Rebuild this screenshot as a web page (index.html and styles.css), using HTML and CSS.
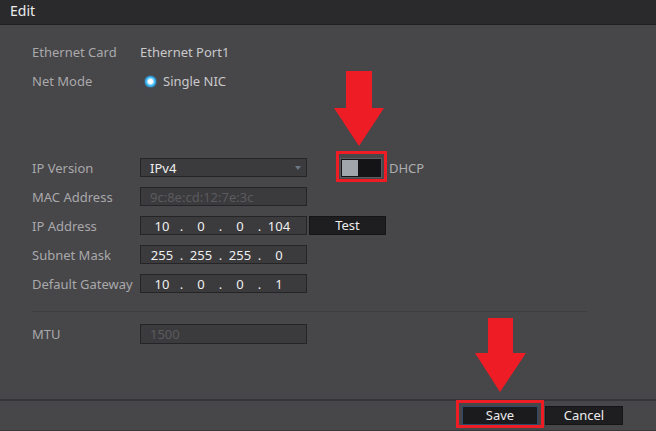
FILE: index.html
```html
<!DOCTYPE html>
<html>
<head>
<meta charset="utf-8">
<link rel="stylesheet" href="styles.css">
</head>
<body>
<div class="window">
  <header class="titlebar">Edit</header>
  <main class="content">
    <div class="row"><span class="label">Ethernet Card</span><span class="value">Ethernet Port1</span></div>
    <div class="row"><span class="label">Net Mode</span><span class="radio-wrap"><span class="radio"></span><span class="value">Single NIC</span></span></div>
    <div class="spacer"></div>
    <div class="row">
      <span class="label">IP Version</span>
      <div class="field select"><span>IPv4</span><span class="caret"></span></div>
      <div class="toggle-wrap">
        <div class="toggle"><span class="knob"></span></div>
        <span class="toggle-label">DHCP</span>
        <span class="highlight hl-toggle"></span>
        <svg class="arrow arrow-top" width="52" height="76" viewBox="0 0 52 76"><polygon points="13,0 39,0 39,37 51,37 26,75 1,37 13,37" fill="#ee1c25"/></svg>
      </div>
    </div>
    <div class="row"><span class="label">MAC Address</span><div class="field disabled">9c:8e:cd:12:7e:3c</div></div>
    <div class="row"><span class="label">IP Address</span>
      <div class="field ip"><span class="seg">10</span><span class="dot">.</span><span class="seg">0</span><span class="dot">.</span><span class="seg">0</span><span class="dot">.</span><span class="seg">104</span></div>
      <button class="btn test">Test</button>
    </div>
    <div class="row"><span class="label">Subnet Mask</span>
      <div class="field ip"><span class="seg">255</span><span class="dot">.</span><span class="seg">255</span><span class="dot">.</span><span class="seg">255</span><span class="dot">.</span><span class="seg">0</span></div>
    </div>
    <div class="row"><span class="label">Default Gateway</span>
      <div class="field ip"><span class="seg">10</span><span class="dot">.</span><span class="seg">0</span><span class="dot">.</span><span class="seg">0</span><span class="dot">.</span><span class="seg">1</span></div>
    </div>
    <hr class="sep">
    <div class="row"><span class="label">MTU</span><div class="field disabled mtu">1500</div></div>
  </main>
  <footer class="footer">
    <div class="save-wrap">
      <button class="btn save">Save</button>
      <span class="highlight hl-save"></span>
      <svg class="arrow arrow-bottom" width="52" height="76" viewBox="0 0 52 76"><polygon points="13,0 38,0 38,35 51,35 25,74 0,35 13,35" fill="#ee1c25"/></svg>
    </div>
    <button class="btn cancel">Cancel</button>
  </footer>
</div>
</body>
</html>
```

FILE: styles.css
```css
* { box-sizing: border-box; }
html, body { margin: 0; padding: 0; }
body {
  width: 656px;
  height: 431px;
  overflow: hidden;
  background: #474649;
  font-family: "Noto Sans", "Open Sans", sans-serif;
  font-size: 13px;
}
.window {
  display: flex;
  flex-direction: column;
  height: 431px;
}
.titlebar {
  height: 25px;
  background: #2a2a2c;
  border-bottom: 1px solid #1f1f21;
  color: #ececec;
  font-size: 14px;
  line-height: 22px;
  padding-left: 10px;
}
.content {
  flex: 1;
  padding: 12px 0 0 32px;
  display: flex;
  flex-direction: column;
}
.row {
  height: 29px;
  display: flex;
  align-items: center;
}
.label {
  width: 108px;
  color: #a9a9ab;
  white-space: nowrap;
}
.value { color: #c9c9cb; }
.radio-wrap { display: flex; align-items: center; }
.radio {
  width: 11px;
  height: 11px;
  border-radius: 50%;
  margin: 2px 7px 0 5px;
  background: radial-gradient(circle, #ffffff 0, #ffffff 25%, #3ab6f5 55%, #1b8fd8 100%);
  box-shadow: 0 0 2px #2aa4ee;
}
.spacer { height: 58px; }
.field {
  width: 167px;
  height: 19px;
  background: #3b3a3d;
  border: 1px solid #252427;
  color: #f0f0f0;
  display: flex;
  align-items: center;
  padding: 0 0 0 9px;
}
.select { justify-content: space-between; padding-right: 5px; }
.caret {
  width: 0; height: 0;
  border-left: 3px solid transparent;
  border-right: 3px solid transparent;
  border-top: 4px solid #6a7886;
}
.disabled { color: #5b5a5e; }
.ip { padding-left: 6px; }
.seg { width: 30px; text-align: center; }
.dot { width: 9px; text-align: center; }
.toggle-wrap {
  position: relative;
  display: flex;
  align-items: center;
  margin-left: 33px;
}
.toggle {
  width: 42px;
  height: 20px;
  border: 1px solid #5c5b5f;
  background: #141417;
  padding: 1px;
  display: flex;
}
.knob {
  width: 16px;
  height: 16px;
  background: #a0a6ac;
}
.toggle-label { color: #aeaeb0; margin-left: 7px; }
.highlight {
  position: absolute;
  border: 3px solid #ee1c25;
}
.hl-toggle { left: -4px; top: -7px; width: 51px; height: 31px; }
.arrow { position: absolute; }
.arrow-top { left: -7px; top: -87px; }
.btn {
  font-family: "Noto Sans", "Open Sans", sans-serif;
  font-size: 13px;
  color: #ececec;
  background: #1e1d20;
  border: 1px solid #151417;
  height: 19px;
  padding: 0;
  line-height: 17px;
}
.test { width: 77px; margin-left: 2px; }
.sep {
  width: 555px;
  border: 0;
  border-top: 1px solid #3d3c3f;
  margin: 13px 0 7px 0;
}
.mtu { height: 20px; }
.footer {
  height: 32px;
  border-top: 2px solid #36353a;
  border-bottom: 1px solid #38373a;
  display: flex;
  justify-content: flex-end;
  align-items: center;
  gap: 7px;
  padding-right: 33px;
  padding-bottom: 1px;
}
.save-wrap { position: relative; display: flex; }
.save { width: 76px; background: #1b1a1d; border-color: #2c4a68; }
.hl-save { left: -6px; top: -6px; width: 88px; height: 28px; }
.arrow-bottom { left: 13px; top: -88px; }
.cancel { width: 78px; }
```
